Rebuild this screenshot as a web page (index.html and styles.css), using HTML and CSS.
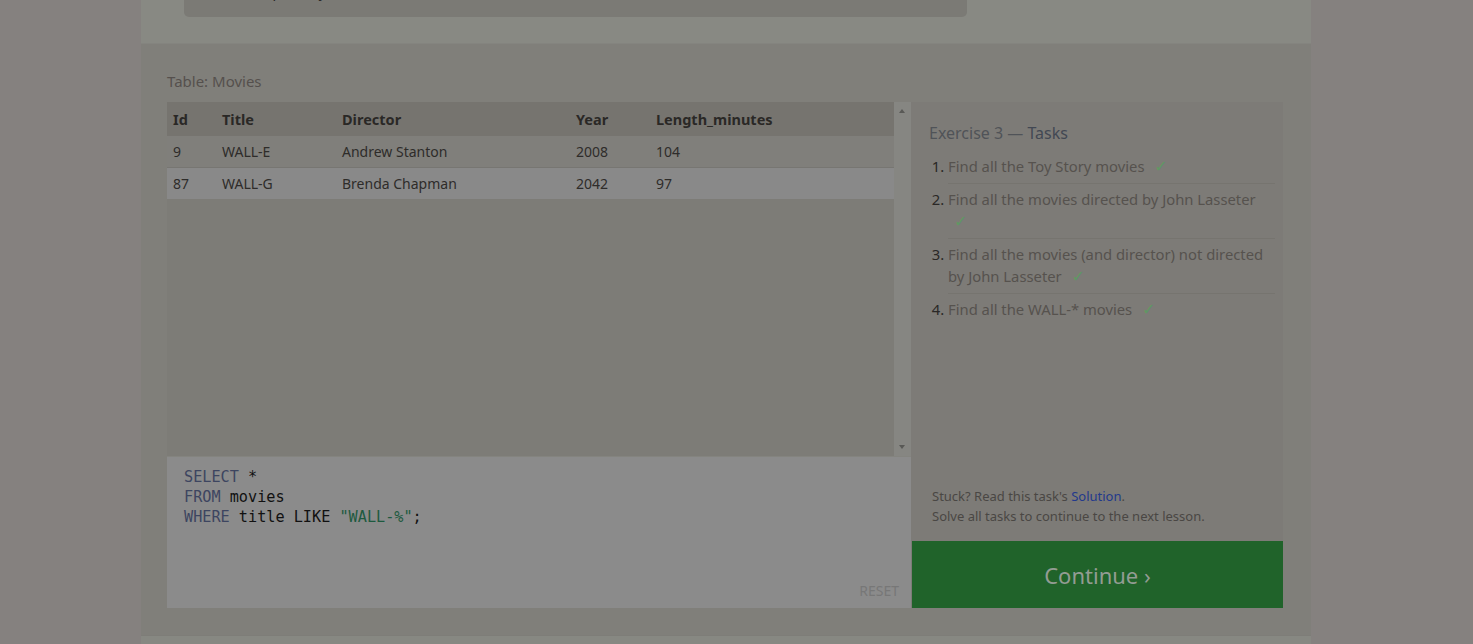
FILE: index.html
```html
<!DOCTYPE html>
<html lang="en">
<head>
<meta charset="utf-8">
<title>SQL Lesson 3 — Exercise</title>
<link rel="stylesheet" href="styles.css">
</head>
<body>
<div class="page">
  <section class="top">
    <pre class="lesson-code">SELECT  pid, year</pre>
  </section>
  <section class="exercise">
    <div class="table-label">Table: Movies</div>
    <div class="workspace">
      <div class="left">
        <div class="results">
          <div class="table-wrap">
            <table class="movies">
              <colgroup>
                <col class="c-id"><col class="c-title"><col class="c-dir"><col class="c-year"><col>
              </colgroup>
              <thead>
                <tr><th>Id</th><th>Title</th><th>Director</th><th>Year</th><th>Length_minutes</th></tr>
              </thead>
              <tbody>
                <tr><td>9</td><td>WALL-E</td><td>Andrew Stanton</td><td>2008</td><td>104</td></tr>
                <tr class="hl"><td>87</td><td>WALL-G</td><td>Brenda Chapman</td><td>2042</td><td>97</td></tr>
              </tbody>
            </table>
          </div>
          <div class="scrollbar">
            <span class="arrow up"></span>
            <span class="arrow down"></span>
          </div>
        </div>
        <div class="editor">
<pre class="code"><span class="kw">SELECT</span> *
<span class="kw">FROM</span> movies
<span class="kw">WHERE</span> title LIKE <span class="str">"WALL-%"</span>;</pre>
          <div class="reset">RESET</div>
        </div>
      </div>
      <aside class="tasks">
        <div class="tasks-body">
          <h3 class="tasks-title"><span class="ex">Exercise 3 —</span> Tasks</h3>
          <ol class="task-list">
            <li><span class="done">Find all the Toy Story movies</span> <span class="check">✓</span></li>
            <li><span class="done">Find all the movies directed by John Lasseter</span> <span class="check">✓</span></li>
            <li><span class="done">Find all the movies (and director) not directed by John Lasseter</span> <span class="check">✓</span></li>
            <li><span class="done">Find all the WALL-* movies</span> <span class="check">✓</span></li>
          </ol>
          <div class="hints">
            <p>Stuck? Read this task's <a href="#">Solution</a>.</p>
            <p>Solve all tasks to continue to the next lesson.</p>
          </div>
        </div>
        <div class="continue">Continue ›</div>
      </aside>
    </div>
  </section>
  <section class="bottom"></section>
</div>
</body>
</html>
```
FILE: styles.css
```css
html, body {
  margin: 0;
  padding: 0;
  height: 100%;
  overflow: hidden;
}
body {
  background: #85817f;
  font-family: "Noto Sans", "Open Sans", sans-serif;
  color: #3a3733;
}
.page {
  width: 1170px;
  margin-left: 141px;
  background: #807f7a;
}
.top {
  height: 43px;
  background: #888983;
  border-bottom: 1px solid #84847f;
  padding-left: 43px;
  overflow: hidden;
}
.lesson-code {
  margin: -20px 0 0 0;
  width: 783px;
  height: 37px;
  box-sizing: border-box;
  padding: 3px 0 0 16px;
  background: #7b7a75;
  border-radius: 0 0 5px 5px;
  font-family: "DejaVu Sans Mono", monospace;
  font-size: 15px;
  line-height: 20px;
  color: #2c2b29;
}
.exercise {
  padding: 27px 28px 27px 26px;
}
.table-label {
  font-size: 15px;
  color: #55504d;
  line-height: 20px;
  margin-bottom: 11px;
}
.workspace {
  display: flex;
  height: 506px;
}
.left {
  width: 744px;
  display: flex;
  flex-direction: column;
}
.results {
  height: 354px;
  display: flex;
  background: #7d7c77;
}
.table-wrap {
  flex: 1;
  overflow: hidden;
}
.movies {
  width: 100%;
  border-collapse: collapse;
  table-layout: fixed;
  font-size: 14px;
}
.c-id { width: 49px; }
.c-title { width: 120px; }
.c-dir { width: 234px; }
.c-year { width: 80px; }
.movies th {
  text-align: left;
  font-weight: 700;
  background: #76746f;
  color: #2a2826;
  height: 34px;
  padding: 0 0 0 6px;
  font-size: 14.5px;
}
.movies td {
  height: 31px;
  padding: 0 0 0 6px;
  color: #2e2c2a;
  background: #807f7b;
  border-bottom: 1px solid #777672;
}
.movies tr.hl td {
  background: #898989;
  border-bottom: none;
}
.scrollbar {
  width: 17px;
  background: #868682;
  position: relative;
}
.arrow {
  position: absolute;
  left: 5px;
  width: 0;
  height: 0;
  border-left: 3px solid transparent;
  border-right: 3px solid transparent;
}
.arrow.up {
  top: 7px;
  border-bottom: 4px solid #595956;
}
.arrow.down {
  bottom: 7px;
  border-top: 4px solid #595956;
}
.editor {
  flex: 1;
  background: #8b8b8b;
  border-top: 1px solid #84847f;
  display: flex;
  flex-direction: column;
  padding: 10px 12px 8px 17px;
}
.code {
  flex: 1;
  margin: 0;
  font-family: "DejaVu Sans Mono", monospace;
  font-size: 15.2px;
  line-height: 20px;
  color: #111;
}
.kw { color: #3d4560; }
.str { color: #1d5a3f; }
.reset {
  align-self: flex-end;
  font-size: 14px;
  color: #777;
  line-height: 18px;
}
.tasks {
  flex: 1;
  display: flex;
  flex-direction: column;
  background: #7d7b77;
}
.tasks-body {
  flex: 1;
  padding: 20px 8px 15px 18px;
  display: flex;
  flex-direction: column;
}
.tasks-title {
  margin: 0 0 7px 0;
  font-size: 16px;
  font-weight: 400;
  line-height: 22px;
  color: #424853;
}
.tasks-title .ex { color: #505358; }
.task-list {
  margin: 0;
  padding: 0 0 0 19px;
  font-size: 14.8px;
  color: #2a2826;
}
.task-list li {
  padding: 4px 0 5px;
  line-height: 22px;
  border-bottom: 1px solid #76746f;
}
.task-list li:last-child { border-bottom: none; }
.done { color: #56524e; }
.check {
  color: #5f9863;
  font-family: "DejaVu Sans", sans-serif;
  font-size: 16px;
  margin-left: 6px;
}
.hints {
  margin-top: auto;
  font-size: 13px;
  color: #4a4744;
  padding-left: 3px;
}
.hints p {
  margin: 0;
  line-height: 20px;
}
.hints a {
  color: #22398c;
  text-decoration: none;
}
.continue {
  height: 67px;
  margin-left: 1px;
  background: #20632a;
  color: #939c93;
  font-size: 22px;
  display: flex;
  align-items: center;
  justify-content: center;
}
.bottom {
  height: 40px;
  background: #878882;
  border-top: 1px solid #7e7d78;
}
```
